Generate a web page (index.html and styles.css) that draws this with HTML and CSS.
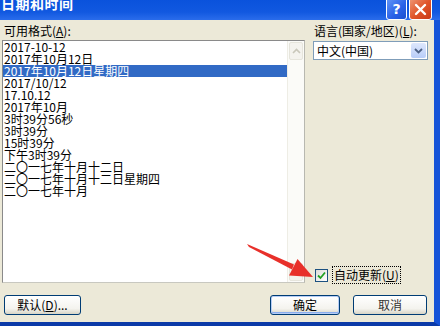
FILE: index.html
```html
<!DOCTYPE html>
<html lang="zh-CN">
<head>
    <meta charset="UTF-8">
    <title>日期和时间</title>
    <link rel="stylesheet" href="styles.css">
</head>
<body>
<div class="window">
    <div class="titlebar">
        <span class="title">日期和时间</span>
        <div class="caption-buttons">
            <span class="cap-btn help">?</span>
            <span class="cap-btn close">
                <svg width="13" height="13" viewBox="0 0 13 13"><path d="M2 2 L11 11 M11 2 L2 11" stroke="#fff" stroke-width="2.4" stroke-linecap="round"/></svg>
            </span>
        </div>
    </div>
    <div class="client">
        <div class="panes">
            <div class="left">
                <div class="label">可用格式(<u>A</u>):</div>
                <div class="listbox">
                    <ul class="items">
                        <li>2017-10-12</li>
                        <li>2017年10月12日</li>
                        <li class="selected">2017年10月12日星期四</li>
                        <li>2017/10/12</li>
                        <li>17.10.12</li>
                        <li>2017年10月</li>
                        <li>3时39分56秒</li>
                        <li>3时39分</li>
                        <li>15时39分</li>
                        <li>下午3时39分</li>
                        <li>二〇一七年十月十二日</li>
                        <li>二〇一七年十月十二日星期四</li>
                        <li>二〇一七年十月</li>
                    </ul>
                    <div class="scrollbar">
                        <span class="sb-btn">
                            <svg width="9" height="6" viewBox="0 0 9 6"><path d="M1 5 L4.5 1.5 L8 5" fill="none" stroke="#c9c7ba" stroke-width="1.6"/></svg>
                        </span>
                        <span class="sb-track"></span>
                        <span class="sb-btn">
                            <svg width="9" height="6" viewBox="0 0 9 6"><path d="M1 1 L4.5 4.5 L8 1" fill="none" stroke="#c9c7ba" stroke-width="1.6"/></svg>
                        </span>
                    </div>
                </div>
            </div>
            <div class="right">
                <div class="label">语言(国家/地区)(<u>L</u>):</div>
                <div class="combo">
                    <span class="combo-text">中文(中国)</span>
                    <span class="combo-btn">
                        <svg width="9" height="6" viewBox="0 0 9 6"><path d="M1 1 L4.5 4.5 L8 1" fill="none" stroke="#4d6185" stroke-width="1.8"/></svg>
                    </span>
                </div>
                <div class="check-row">
                    <span class="checkbox">
                        <svg width="9" height="9" viewBox="0 0 9 9"><path d="M1 4.5 L3.5 7 L8 1.5" fill="none" stroke="#21a121" stroke-width="1.8"/></svg>
                    </span>
                    <span class="check-label">自动更新(<u>U</u>)</span>
                </div>
            </div>
        </div>
        <div class="footer">
            <span class="button">默认(<u>D</u>)...</span>
            <span class="button default ok">确定</span>
            <span class="button cancel">取消</span>
        </div>
    </div>
    <svg class="arrow" width="440" height="335" viewBox="0 0 440 335">
        <polygon points="247,244 249,247 292,269.5 294,264.5" fill="#e8302a"/>
        <polygon points="313,277 289,275.5 297.5,259" fill="#e8302a"/>
    </svg>
</div>
</body>
</html>
```

FILE: styles.css
```css
body {
    margin: 0;
    background: #fff;
    font-family: "Noto Sans CJK SC", "DejaVu Sans", sans-serif;
    font-size: 12px;
    color: #000;
}
.window {
    position: relative;
    width: 440px;
    height: 335px;
    overflow: hidden;
    background: #fff;
}
.titlebar {
    height: 20px;
    display: flex;
    justify-content: space-between;
    align-items: flex-start;
    background: linear-gradient(#0a52dc, #1158e0 60%, #2a6ceb);
    overflow: hidden;
}
.title {
    margin: -5px 0 0 1px;
    color: #fff;
    font-weight: bold;
    font-size: 14px;
    line-height: 16px;
    letter-spacing: 0.5px;
}
.caption-buttons {
    display: flex;
    gap: 2px;
    margin: -5px 8px 0 0;
}
.cap-btn {
    width: 19px;
    height: 20px;
    border: 1px solid #fff;
    border-radius: 3px;
    display: flex;
    align-items: center;
    justify-content: center;
    color: #fff;
    font-family: "DejaVu Sans", sans-serif;
    font-weight: bold;
    font-size: 14px;
    padding-top: 3px;
    box-sizing: content-box;
}
.help {
    background: linear-gradient(135deg, #6a9cf8, #2a62e8 60%, #1a4fd0);
}
.close {
    width: 21px;
    background: linear-gradient(135deg, #f0a080, #e0542a 55%, #c83a18);
}
.client {
    width: 434px;
    height: 302px;
    background: #ece9d8;
    border-right: 6px solid #1553d8;
    border-bottom: 4px solid #0b3aa8;
    display: flex;
    flex-direction: column;
}
.panes {
    display: flex;
    gap: 7px;
    padding: 2px 0 0 2px;
    height: 261px;
}
.label {
    height: 18px;
    line-height: 18px;
    padding-left: 2px;
    white-space: nowrap;
}
u {
    text-decoration: underline;
}
.left {
    width: 303px;
    display: flex;
    flex-direction: column;
}
.listbox {
    height: 243px;
    box-sizing: border-box;
    border: 1px solid #8a8a8a;
    border-right-color: #b8b8b0;
    border-bottom-color: #c8c8c0;
    background: #fff;
    display: flex;
}
.items {
    list-style: none;
    margin: 0;
    padding: 0;
    flex: 1;
}
.items li {
    height: 12px;
    line-height: 12px;
    padding-left: 1px;
    white-space: nowrap;
}
.items li.selected {
    background: #316ac5;
    color: #fff;
}
.scrollbar {
    width: 17px;
    display: flex;
    flex-direction: column;
    background: #fbfbf8;
    border-left: 1px solid #eeede5;
    box-sizing: border-box;
}
.sb-btn {
    height: 16px;
    margin: 1px;
    border: 1px solid #e6e5dc;
    border-radius: 2px;
    background: #f4f3ee;
    display: flex;
    align-items: center;
    justify-content: center;
}
.sb-track {
    flex: 1;
}
.right {
    width: 118px;
    display: flex;
    flex-direction: column;
}
.combo {
    margin: 1px 0 0 1px;
    width: 115px;
    height: 19px;
    box-sizing: border-box;
    border: 1px solid #7f9db9;
    background: #fff;
    display: flex;
    align-items: center;
}
.combo-text {
    flex: 1;
    padding-left: 3px;
    line-height: 17px;
}
.combo-btn {
    width: 15px;
    height: 15px;
    margin-right: 1px;
    border-radius: 2px;
    background: linear-gradient(#dde7fd, #b8cdf8);
    display: flex;
    align-items: center;
    justify-content: center;
}
.check-row {
    margin-top: auto;
    margin-bottom: -1px;
    display: flex;
    align-items: center;
    gap: 4px;
    padding-left: 3px;
}
.checkbox {
    width: 13px;
    height: 13px;
    box-sizing: border-box;
    border: 1px solid #1c5180;
    background: linear-gradient(135deg, #dcdcd7, #fff);
    display: flex;
    align-items: center;
    justify-content: center;
}
.check-label {
    border: 1px dotted #000;
    padding: 0 1px;
    line-height: 16px;
    white-space: nowrap;
}
.footer {
    margin-top: 12px;
    display: flex;
    gap: 13px;
    padding: 0 7px 0 4px;
}
.button {
    width: 77px;
    height: 20px;
    box-sizing: border-box;
    border: 1px solid #003c74;
    border-radius: 3px;
    background: linear-gradient(#fff, #f4f3ee 70%, #d8d5c6);
    display: flex;
    align-items: center;
    justify-content: center;
    line-height: 18px;
}
.ok {
    width: 70px;
    margin-left: auto;
}
.default {
    box-shadow: inset 0 0 0 1px #b6cdf5, inset 0 -1px 0 1px #89adee;
}
.cancel {
    width: 74px;
    color: #333;
}
.arrow {
    position: absolute;
    left: 0;
    top: 0;
    pointer-events: none;
}
```
